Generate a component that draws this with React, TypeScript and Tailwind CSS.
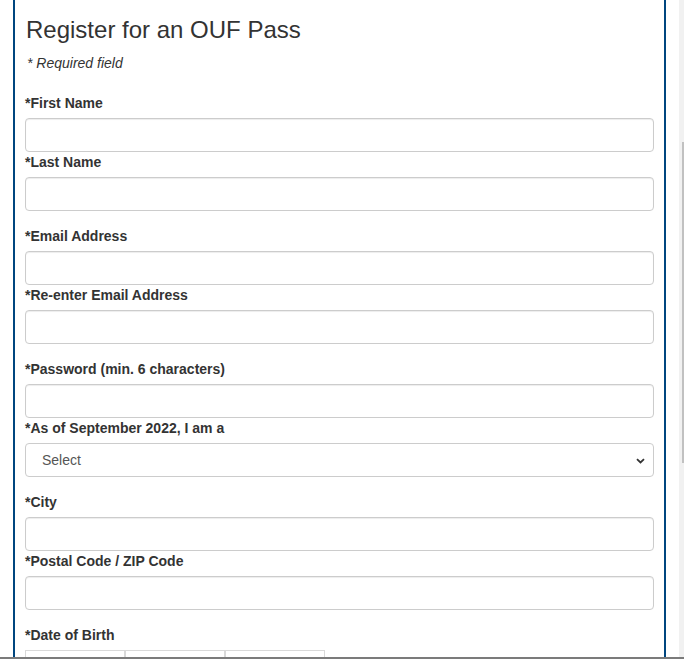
import React from "react";

const labelCls =
  "block h-[20px] leading-[20px] text-[14px] font-bold text-[#333] mb-[5px]";
const inputCls =
  "block w-full h-[34px] rounded-[4px] border border-[#ccc] bg-white shadow-[inset_0_1px_1px_rgba(0,0,0,0.075)]";

function Field({ label }: { label: string }) {
  return (
    <>
      <label className={labelCls}>{label}</label>
      <input type="text" className={inputCls} />
    </>
  );
}

export default function App() {
  return (
    <div
      className="relative w-[684px] h-[659px] overflow-hidden bg-white"
      style={{ fontFamily: '"Liberation Sans", Arial, sans-serif' }}
    >
      <div className="ml-[13px] w-[653px] min-h-[700px] border-x-2 border-[#00467f] px-[10px] pt-[17px]">
        <h2 className="text-[24px] leading-[26px] font-normal text-[#333] mb-[10px] ml-px">
          Register for an OUF Pass
        </h2>
        <p className="text-[14px] leading-[20px] italic text-[#333] mb-[20px] ml-[2px]">
          * Required field
        </p>

        <div className="mb-[15px]">
          <Field label="*First Name" />
          <Field label="*Last Name" />
        </div>
        <div className="mb-[15px]">
          <Field label="*Email Address" />
          <Field label="*Re-enter Email Address" />
        </div>
        <div className="mb-[15px]">
          <Field label="*Password (min. 6 characters)" />
          <label className={labelCls}>*As of September 2022, I am a</label>
          <div className="relative h-[34px] w-full rounded-[4px] border border-[#ccc] bg-white flex items-center pl-[16px] text-[14px] text-[#555]">
            <span>Select</span>
            <svg
              className="absolute right-[8px] top-[14px]"
              width="9"
              height="6"
              viewBox="0 0 9 6"
            >
              <path
                d="M1 1.2 L4.5 4.5 L8 1.2"
                fill="none"
                stroke="#333"
                strokeWidth="1.8"
              />
            </svg>
          </div>
        </div>
        <div className="mb-[15px]">
          <Field label="*City" />
          <Field label="*Postal Code / ZIP Code" />
        </div>
        <div>
          <label className={labelCls}>*Date of Birth</label>
          <div className="flex">
            <div className="w-[100px] h-[34px] border border-[#d9d9d9] bg-white" />
            <div className="w-[100px] h-[34px] border border-[#d9d9d9] bg-white" />
            <div className="w-[100px] h-[34px] border border-[#d9d9d9] bg-white" />
          </div>
        </div>
      </div>

      {/* partial scrollbar at right edge */}
      <div className="absolute right-0 top-0 w-[5px] h-full bg-[#f1f1f1]">
        <div className="absolute right-0 top-[142px] w-[2px] h-[321px] bg-[#c1c1c1]" />
      </div>

      {/* bottom window edge */}
      <div className="absolute left-0 bottom-0 w-full h-[2px] bg-[#7b7b7b]" />
    </div>
  );
}
